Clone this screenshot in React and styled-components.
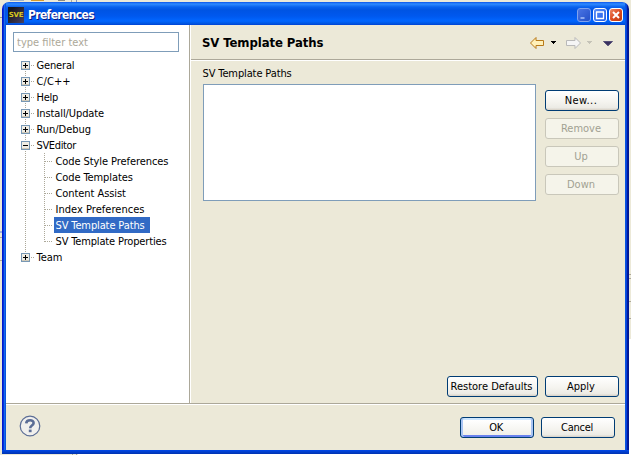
import React from 'react';
import styled, { createGlobalStyle, css } from 'styled-components';

const Global = createGlobalStyle`
  * { box-sizing: border-box; }
  body { margin: 0; overflow: hidden; }
  body, button, input { font-family: "DejaVu Sans Condensed", "DejaVu Sans", sans-serif; font-stretch: condensed; font-size: 11px; }
`;

const Desktop = styled.div`
  width: 631px;
  height: 455px;
  padding: 2px 2px 1px 2px;
  background:
    linear-gradient(#9c9a8c, #9c9a8c) 0 17px / 3px 1px no-repeat,
    linear-gradient(#9fb0dc, #9fb0dc) 0 231px / 3px 2px no-repeat,
    linear-gradient(#aca899, #aca899) 0 237px / 3px 1px no-repeat,
    linear-gradient(#aca899, #aca899) 0 260px / 3px 1px no-repeat,
    linear-gradient(#9db4cf, #9db4cf) 10px 0 / 14px 1px no-repeat,
    linear-gradient(#d59a2c, #d59a2c) 31px 0 / 13px 1px no-repeat,
    linear-gradient(#8d8b80, #8d8b80) 58px 0 / 7px 1px no-repeat,
    linear-gradient(#aca899, #aca899) 71px 0 / 1px 2px no-repeat,
    linear-gradient(#8794bd, #8794bd) 76px 0 / 1px 3px no-repeat,
    linear-gradient(#aca899, #aca899) 629px 274px / 2px 1px no-repeat,
    linear-gradient(#aca899, #aca899) 629px 278px / 2px 1px no-repeat,
    linear-gradient(#aca899, #aca899) 629px 301px / 2px 1px no-repeat,
    linear-gradient(#aca899, #aca899) 629px 318px / 2px 1px no-repeat,
    linear-gradient(#aca899, #aca899) 72px 454px / 1px 1px no-repeat,
    linear-gradient(#aca899, #aca899) 76px 454px / 1px 1px no-repeat,
    linear-gradient(#fff, #fff) 629px 339px / 2px 116px no-repeat,
    linear-gradient(#fff, #fff) 78px 454px / 553px 1px no-repeat,
    #ece9d8;
`;

const Window = styled.div`
  display: flex;
  flex-direction: column;
  width: 627px;
  height: 452px;
  padding: 0 4px 4px;
  border-radius: 7px 7px 0 0;
  background:
    linear-gradient(#0a55ec 0, #2f8bff 2px, #0962ee 5px, #0054e3 8px, #0058ee 14px, #0166ff 19px, #0053dc 22px, #003dd7 23px) 4px 0 / 619px 23px no-repeat,
    linear-gradient(#0048e8, #0032b0) 0 448px / 100% 4px no-repeat,
    linear-gradient(90deg, #0019cf 0, #0019cf 1px, #0831d9 1px, #0831d9 2px, #166aee 2px, #166aee 3px, #0855dd 3px, #0855dd 623px, #0855dd 624px, #0841dd 624px, #0841dd 625px, #001ea0 625px, #00138c 627px);
  overflow: hidden;
`;

const TitleBar = styled.header`
  flex: 0 0 23px;
  display: flex;
  align-items: center;
  padding: 3px 2px 0 2px;
`;

const WindowTitle = styled.h1`
  flex: 1;
  margin: 0 0 0 4px;
  color: #fff;
  font: bold 12px/15px "DejaVu Sans Condensed", "DejaVu Sans", sans-serif;
  font-stretch: condensed;
  letter-spacing: -0.65px;
  text-shadow: 1px 1px 0 #0a1883;
`;

const AppIcon = styled.span`
  width: 16px;
  height: 16px;
  background: linear-gradient(135deg, #16161e 20%, #4a4262);
  color: #d8c620;
  font: bold 7px/17px "DejaVu Sans", sans-serif;
  letter-spacing: -0.2px;
  text-align: center;
  overflow: hidden;
`;

const CaptionButton = styled.button`
  display: grid;
  place-items: center;
  width: 14px;
  height: 14px;
  margin-left: 2px;
  padding: 0;
  border: 1px solid ${(p) => (p.$kind === 'min' ? '#7fa2ee' : '#fff')};
  border-radius: 3px;
  background: ${(p) =>
    p.$kind === 'close'
      ? 'linear-gradient(135deg, #ee8a68, #dc4a20 50%, #c03a10)'
      : p.$kind === 'min'
        ? 'linear-gradient(135deg, #4a74e4, #2450c8)'
        : 'linear-gradient(135deg, #5c90f8, #1c5ae8)'};
`;

const Content = styled.div`
  flex: 1;
  display: flex;
  min-height: 0;
`;

const Sidebar = styled.aside`
  width: 184px;
  padding: 7px 0 0 7px;
  background: #fff;
  border-right: 1px solid #aca899;
`;

const FilterInput = styled.input`
  display: block;
  width: 166px;
  height: 20px;
  padding: 0 3px;
  border: 1px solid #7f9db9;
  outline: 0;
  background: #fff;
  &::placeholder { color: #aca899; opacity: 1; }
`;

const Tree = styled.ul`
  margin: 5px 0 0 8px;
  padding: 0;
  list-style: none;
`;

const Row = styled.div`
  display: flex;
  align-items: center;
  height: 16px;
`;

const Guide = styled.svg`
  display: block;
  flex: none;
  shape-rendering: crispEdges;
`;

const NodeLabel = styled.span`
  height: 16px;
  padding: 0 5px 0 1.5px;
  line-height: 18px;
  white-space: nowrap;
  letter-spacing: ${(p) => p.$track ?? 0}px;
  ${(p) => p.$selected && css`
    width: 96px;
    background: #316ac5;
    color: #fff;
  `}
`;

const Page = styled.main`
  flex: 1;
  display: flex;
  flex-direction: column;
  background: #ece9d8;
  border-left: 1px solid #fff;
`;

const PageHeader = styled.div`
  display: flex;
  align-items: center;
  justify-content: space-between;
  height: 35px;
  padding: 2px 11px 0 11px;
  border-bottom: 1px solid #aca899;
  box-shadow: 0 1px 0 #fff;
`;

const PageTitle = styled.h2`
  margin: 0;
  font: bold 13px/16px "DejaVu Sans Condensed", "DejaVu Sans", sans-serif;
  font-stretch: condensed;
  letter-spacing: -0.08px;
`;

const PageBody = styled.div`
  flex: 1;
  display: flex;
  flex-direction: column;
  padding: 6px 6px 6px 12px;
`;

const FieldLabel = styled.label`
  height: 18px;
  margin-left: -0.5px;
  line-height: 16px;
  letter-spacing: -0.12px;
`;

const Field = styled.div`
  display: flex;
  flex: 1;
  gap: 9px;
`;

const PathList = styled.div`
  width: 333px;
  height: 117px;
  background: #fff;
  border: 1px solid #7f9db9;
`;

const ButtonColumn = styled.div`
  display: flex;
  flex-direction: column;
  gap: 7px;
  padding-top: 6px;
`;

const ButtonRow = styled.div`
  display: flex;
  justify-content: flex-end;
  gap: 7px;
`;

const Button = styled.button`
  width: ${(p) => p.$width ?? 74}px;
  height: 21px;
  padding: 1px 2px 0 0;
  border: 1px solid #003c74;
  border-radius: 3px;
  background: linear-gradient(#fff, #f4f3ee 60%, #ecebe5 88%, #d6d0c5);
  color: #000;
  line-height: 18px;
  white-space: nowrap;
  letter-spacing: ${(p) => p.$track ?? 0}px;
  ${(p) => p.$primary && css`
    background: linear-gradient(#cee7ff 0 2px, #fff 2px, #f1f0ea 17px, #6982ee 17px);
    box-shadow: inset 2px 0 0 #a9c4f3, inset -2px 0 0 #a9c4f3;
  `}
  &:disabled {
    border-color: #c9c7ba;
    background: #f5f4ea;
    color: #a1a192;
  }
`;

const Footer = styled.footer`
  flex: 0 0 47px;
  display: flex;
  align-items: center;
  justify-content: space-between;
  padding: 0 10px 0 13px;
  background: #ece9d8;
  border-top: 1px solid #aca899;
  box-shadow: inset 0 1px 0 #fff;
`;

const HelpIcon = styled.svg`
  display: block;
  margin-bottom: 2px;
`;

function RootGuide({ open, first, last }) {
  return (
    <Guide width="14" height="16">
      <path d={`M4.5 ${first ? 8 : 0}V${last ? 8 : 16}M10 8.5H14`} stroke="#aca899" strokeDasharray="1 1" />
      <rect x=".5" y="4.5" width="8" height="8" fill="#f0ede4" stroke="#7898b5" />
      <path d="M1 11.5h7" stroke="#d0c9b8" />
      <path d={`M2 8.5h5${open ? '' : 'M4.5 6v5'}`} stroke="#000" />
    </Guide>
  );
}

function ChildGuide({ last }) {
  return (
    <Guide width="33" height="16">
      <path d={`M4.5 0V16M23.5 0V${last ? 9 : 16}M24 8.5H32`} fill="none" stroke="#aca899" strokeDasharray="1 1" />
    </Guide>
  );
}

const children = [
  ['Code Style Preferences', -0.08],
  ['Code Templates', -0.1],
  ['Content Assist', -0.07],
  ['Index Preferences', 0.03],
  ['SV Template Paths', -0.12],
  ['SV Template Properties', -0.15],
];

const roots = [
  { name: 'General', track: -0.15 },
  { name: 'C/C++', track: 0.1 },
  { name: 'Help', track: -0.3 },
  { name: 'Install/Update', track: -0.1 },
  { name: 'Run/Debug', track: -0.05 },
  { name: 'SVEditor', track: -0.35, children },
  { name: 'Team', track: 0 },
];

const Svg = styled.svg`
  display: block;
`;

function Navigation() {
  return (
    <Svg width="88" height="16" viewBox="0 0 88 16">
      <path d="M4.5 8L10 2.5V5.5H17.5V10.5H10V13.5Z" fill="#fff0b8" stroke="#b87918" />
      <path d="M25 6h5v1h-1v1h-1v1h-1V8h-1V7h-1z" fill="#000" />
      <path d="M54.5 8L49 2.5V5.5H40.5V10.5H49V13.5Z" fill="#f5f5f5" stroke="#b9b9b9" />
      <path d="M61 6h5v1h-1v1h-1v1h-1V8h-1V7h-1z" fill="#c5c3b7" />
      <path d="M77.5 6.5h9L82 10.8z" fill="#38305e" stroke="#555077" />
    </Svg>
  );
}

export default function App() {
  return (
    <>
      <Global />
      <Desktop>
        <Window>
          <TitleBar>
            <AppIcon>SVE</AppIcon>
            <WindowTitle>Preferences</WindowTitle>
            <CaptionButton $kind="min" aria-label="Minimize">
              <Svg width="12" height="12"><path d="M2.5 9h4" stroke="#8daaf0" strokeWidth="2" /></Svg>
            </CaptionButton>
            <CaptionButton $kind="max" aria-label="Maximize">
              <Svg width="12" height="12"><path d="M2.5 3V9.5H9.5V3M2 3H10" fill="none" stroke="#fff" strokeWidth="1.3" /></Svg>
            </CaptionButton>
            <CaptionButton $kind="close" aria-label="Close">
              <Svg width="12" height="12"><path d="M3 3L9 9M9 3L3 9" stroke="#fff" strokeWidth="2" /></Svg>
            </CaptionButton>
          </TitleBar>
          <Content>
            <Sidebar>
              <FilterInput placeholder="type filter text" />
              <Tree>
                {roots.map((node, i) => (
                  <li key={node.name}>
                    <Row>
                      <RootGuide open={!!node.children} first={i === 0} last={i === roots.length - 1} />
                      <NodeLabel $track={node.track}>{node.name}</NodeLabel>
                    </Row>
                    {node.children?.map(([name, track], j) => (
                      <Row key={name}>
                        <ChildGuide last={j === node.children.length - 1} />
                        <NodeLabel $track={track} $selected={name === 'SV Template Paths'}>{name}</NodeLabel>
                      </Row>
                    ))}
                  </li>
                ))}
              </Tree>
            </Sidebar>
            <Page>
              <PageHeader>
                <PageTitle>SV Template Paths</PageTitle>
                <Navigation />
              </PageHeader>
              <PageBody>
                <FieldLabel>SV Template Paths</FieldLabel>
                <Field>
                  <PathList />
                  <ButtonColumn>
                    <Button $track={0.4}>New...</Button>
                    <Button disabled>Remove</Button>
                    <Button disabled>Up</Button>
                    <Button disabled>Down</Button>
                  </ButtonColumn>
                </Field>
                <ButtonRow>
                  <Button $width={91}>Restore Defaults</Button>
                  <Button>Apply</Button>
                </ButtonRow>
              </PageBody>
            </Page>
          </Content>
          <Footer>
            <HelpIcon width="22" height="22" viewBox="0 0 22 22">
              <circle cx="11" cy="11" r="9.8" fill="#f1f0ed" stroke="#5b6d96" strokeWidth="1.2" />
              <path d="M7.2 8.3C7.5 4.2 15 4.2 14.6 8.2C14.4 10.7 11.2 10.5 11.2 13.2" fill="none" stroke="#5b6d96" strokeWidth="2.6" />
              <path d="M9.8 14.6h2.8v2.6H9.8z" fill="#5b6d96" />
            </HelpIcon>
            <ButtonRow>
              <Button $primary $track={-0.4}>OK</Button>
              <Button $track={-0.25}>Cancel</Button>
            </ButtonRow>
          </Footer>
        </Window>
      </Desktop>
    </>
  );
}
